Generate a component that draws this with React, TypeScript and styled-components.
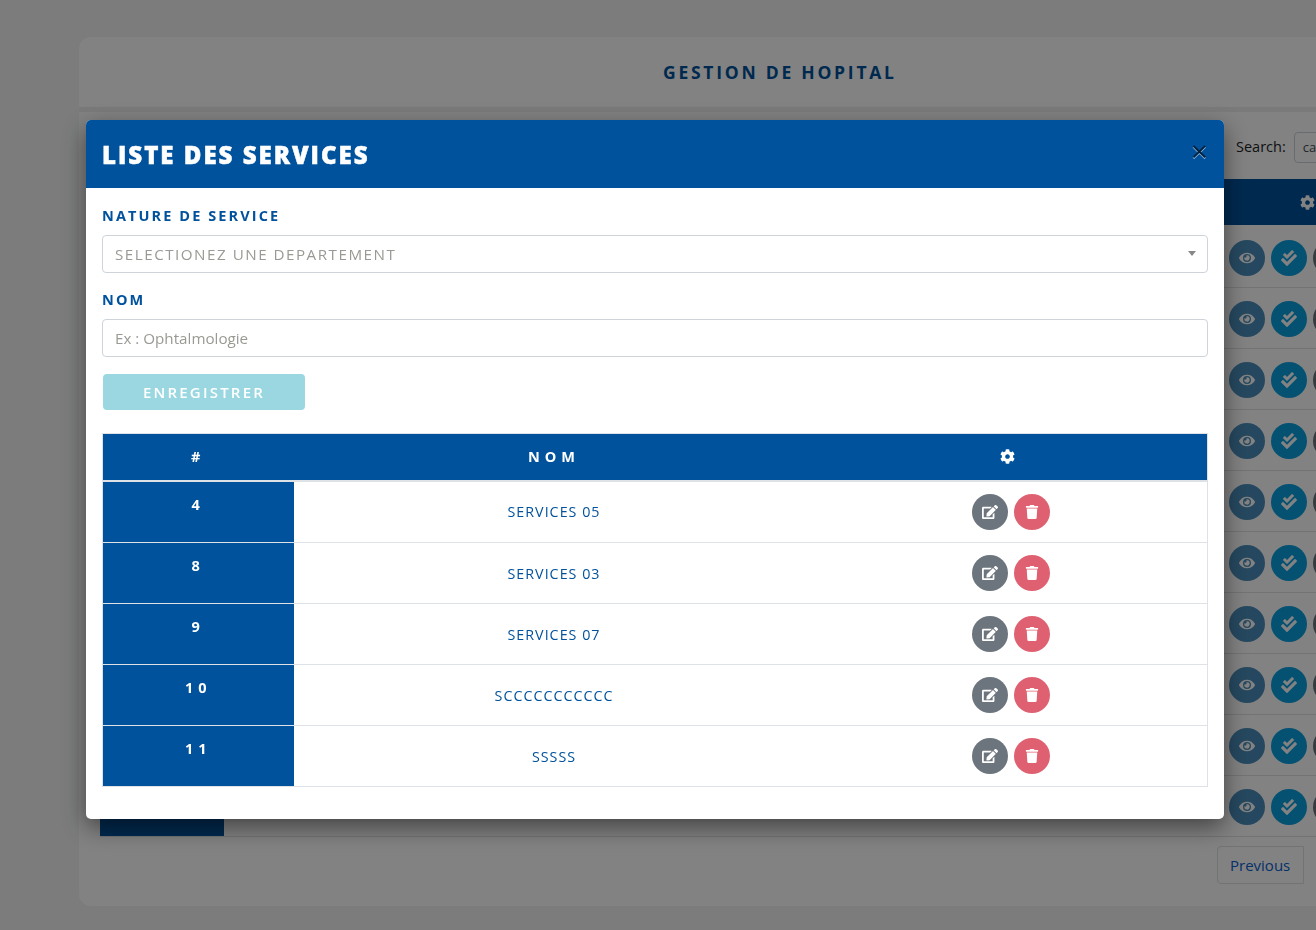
import React from 'react';
import styled, { createGlobalStyle } from 'styled-components';
import { FaCog, FaEdit, FaTrash, FaEye, FaCheckDouble } from 'react-icons/fa';

const Global = createGlobalStyle`
  html, body { margin: 0; padding: 0; height: 100%; overflow: hidden; }
  body { background: #f3f4f5; font-family: "Open Sans", "Noto Sans", sans-serif; }
  * { box-sizing: border-box; }
`;

const Page = styled.div`
  width: 1316px;
  height: 930px;
  overflow: hidden;
  padding: 37px 0 0 79px;
`;

const Card = styled.div`
  width: 1400px;
  height: 869px;
  background: #fff;
  border-radius: 12px;
  display: flex;
  flex-direction: column;
`;

const CardHeader = styled.div`
  height: 75px;
  flex: none;
  border-bottom: 5px solid #f0f0f0;
  padding: 23px 0 0 584px;
`;

const PageTitle = styled.h1`
  margin: 0;
  font-size: 17.5px;
  line-height: 24px;
  font-weight: 700;
  letter-spacing: 2.75px;
  color: #00529c;
`;

const CardBody = styled.div`
  padding: 20px 21px 0;
  display: flex;
  flex-direction: column;
`;

const SearchRow = styled.div`
  display: flex;
  align-items: center;
  gap: 8px;
  padding-left: 1136px;
  height: 31px;
  font-size: 14.5px;
  color: #212529;
`;

const SearchLabel = styled.span`
  margin-top: -2px;
`;

const SearchInput = styled.div`
  width: 100px;
  height: 31px;
  border: 1px solid #ced4da;
  border-radius: 4px;
  font-size: 13px;
  line-height: 29px;
  padding-left: 8px;
  color: #495057;
`;

const BackTable = styled.div`
  margin-top: 16px;
  width: 1300px;
`;

const BackHead = styled.div`
  height: 46px;
  background: #00529c;
  color: #fff;
  display: flex;
  align-items: center;
  padding-left: 1200px;
  font-size: 15px;
  margin-bottom: 2px;
`;

const BackRow = styled.div`
  height: 61px;
  display: flex;
  border-bottom: 1px solid #dee2e6;
`;

const BackId = styled.div`
  width: 124px;
  flex: none;
  background: #00529c;
`;

const BackActions = styled.div`
  display: flex;
  gap: 6px;
  padding: 13px 0 0 1005px;
`;

const BackCircle = styled.span<{ $bg: string }>`
  width: 36px;
  height: 36px;
  flex: none;
  border-radius: 50%;
  background: ${p => p.$bg};
  color: #fff;
  display: flex;
  align-items: center;
  justify-content: center;
  font-size: 16px;
`;

const Pager = styled.div`
  margin: 9px 0 0 1117px;
  display: flex;
`;

const PagerItem = styled.div`
  width: 87px;
  height: 38px;
  padding: 0 12px;
  border: 1px solid #dee2e6;
  border-radius: 4px 0 0 4px;
  color: #0a5fd0;
  font-size: 15px;
  line-height: 37px;
`;

const Backdrop = styled.div`
  position: fixed;
  inset: 0;
  background: rgba(0, 0, 0, 0.49);
`;

const Modal = styled.div`
  position: fixed;
  left: 86px;
  top: 120px;
  width: 1138px;
  height: 699px;
  background: #fff;
  border-radius: 5px;
  overflow: hidden;
  box-shadow: 0 8px 24px rgba(0, 0, 0, 0.5);
`;

const ModalHeader = styled.div`
  height: 68px;
  background: #00529c;
  display: flex;
  align-items: center;
  justify-content: space-between;
  padding: 0 16px;
`;

const ModalTitle = styled.h2`
  margin: 0;
  color: #fff;
  font-size: 24px;
  font-weight: 800;
  letter-spacing: 2px;
  -webkit-text-stroke: 0.5px #fff;
`;

const Close = styled.span`
  font-size: 30px;
  line-height: 30px;
  color: #000;
  opacity: 0.6;
  text-shadow: 0 1px 0 #fff;
  margin-top: -6px;
`;

const ModalBody = styled.div`
  padding: 18px 16px 0;
`;

const Label = styled.div`
  font-size: 14.5px;
  line-height: 19px;
  font-weight: 700;
  letter-spacing: 2.1px;
  color: #00529c;
  margin-bottom: 10px;
`;

const Field = styled.div<{ $spaced?: boolean }>`
  height: 38px;
  border: 1px solid #ced4da;
  border-radius: 4px;
  padding: 0 12px 1px;
  display: flex;
  align-items: center;
  justify-content: space-between;
  font-size: 15.2px;
  letter-spacing: ${p => (p.$spaced ? '1.5px' : '0')};
  color: #9a9a94;
  margin-bottom: 17px;
`;

const Caret = styled.span`
  width: 0;
  height: 0;
  margin: -1px -1px 0 0;
  border-left: 4px solid transparent;
  border-right: 4px solid transparent;
  border-top: 5px solid #888;
`;

const SaveButton = styled.div`
  width: 202px;
  height: 36px;
  margin: 0 0 23px 1px;
  padding-bottom: 1px;
  background: #9ad7e0;
  border-radius: 4px;
  color: #fff;
  font-size: 15px;
  font-weight: 600;
  letter-spacing: 2.2px;
  display: flex;
  align-items: center;
  justify-content: center;
`;

const Table = styled.table`
  width: 1106px;
  border-collapse: collapse;
  table-layout: fixed;
  border: 1px solid #dee2e6;
`;

const IdCol = styled.col`
  width: 191px;
`;

const NameCol = styled.col`
  width: 521px;
`;

const HeadCell = styled.th`
  height: 47px;
  background: #00529c;
  color: #fff;
  font-size: 14.5px;
  font-weight: 700;
  letter-spacing: 5px;
  text-align: center;
  padding: 0 0 1px;
  border-bottom: 2px solid #dee2e6;

  svg {
    display: block;
    margin: 0 auto;
    font-size: 15px;
    transform: translateX(-3px);
  }
`;

const IdCell = styled.th`
  height: 61px;
  background: #00529c;
  color: #fff;
  font-size: 14.5px;
  font-weight: 700;
  letter-spacing: 5px;
  text-align: center;
  vertical-align: top;
  padding: 13px 0 0;
  border-top: 1px solid #dee2e6;

  tr:first-child > & {
    height: 62px;
  }
`;

const NameCell = styled.td`
  font-size: 14.3px;
  letter-spacing: 1px;
  color: #00529c;
  text-align: center;
  padding: 0;
  border-top: 1px solid #dee2e6;
`;

const ActionsCell = styled.td`
  padding: 0;
  border-top: 1px solid #dee2e6;
`;

const Actions = styled.div`
  display: flex;
  justify-content: center;
  gap: 6px;
`;

const RoundButton = styled.span<{ $bg: string; $size: number }>`
  width: 36px;
  height: 36px;
  border-radius: 50%;
  background: ${p => p.$bg};
  color: #fff;
  display: flex;
  align-items: center;
  justify-content: center;
  font-size: ${p => p.$size}px;
`;

const rows = [
  ['4', 'SERVICES 05'],
  ['8', 'SERVICES 03'],
  ['9', 'SERVICES 07'],
  ['10', 'SCCCCCCCCCCC'],
  ['11', 'SSSSS'],
];

const backRows = [0, 1, 2, 3, 4, 5, 6, 7, 8, 9];

export default function App() {
  return (
    <>
      <Global />
      <Page>
        <Card>
          <CardHeader>
            <PageTitle>GESTION DE HOPITAL</PageTitle>
          </CardHeader>
          <CardBody>
            <SearchRow>
              <SearchLabel>Search:</SearchLabel>
              <SearchInput>ca</SearchInput>
            </SearchRow>
            <BackTable>
              <BackHead>
                <FaCog />
              </BackHead>
              {backRows.map(i => (
                <BackRow key={i}>
                  <BackId />
                  <BackActions>
                    <BackCircle $bg="#4a8ebc"><FaEye /></BackCircle>
                    <BackCircle $bg="#0a9fe0"><FaCheckDouble /></BackCircle>
                    <BackCircle $bg="#6c757d" />
                  </BackActions>
                </BackRow>
              ))}
            </BackTable>
            <Pager>
              <PagerItem>Previous</PagerItem>
            </Pager>
          </CardBody>
        </Card>
      </Page>
      <Backdrop />
      <Modal>
        <ModalHeader>
          <ModalTitle>LISTE DES SERVICES</ModalTitle>
          <Close>×</Close>
        </ModalHeader>
        <ModalBody>
          <Label>NATURE DE SERVICE</Label>
          <Field $spaced>
            SELECTIONEZ UNE DEPARTEMENT
            <Caret />
          </Field>
          <Label>NOM</Label>
          <Field>Ex : Ophtalmologie</Field>
          <SaveButton>ENREGISTRER</SaveButton>
          <Table>
            <colgroup>
              <IdCol />
              <NameCol />
              <col />
            </colgroup>
            <thead>
              <tr>
                <HeadCell>#</HeadCell>
                <HeadCell>NOM</HeadCell>
                <HeadCell><FaCog /></HeadCell>
              </tr>
            </thead>
            <tbody>
              {rows.map(([id, name]) => (
                <tr key={id}>
                  <IdCell>{id}</IdCell>
                  <NameCell>{name}</NameCell>
                  <ActionsCell>
                    <Actions>
                      <RoundButton $bg="#6c757d" $size={16}><FaEdit /></RoundButton>
                      <RoundButton $bg="#df6070" $size={14}><FaTrash /></RoundButton>
                    </Actions>
                  </ActionsCell>
                </tr>
              ))}
            </tbody>
          </Table>
        </ModalBody>
      </Modal>
    </>
  );
}
